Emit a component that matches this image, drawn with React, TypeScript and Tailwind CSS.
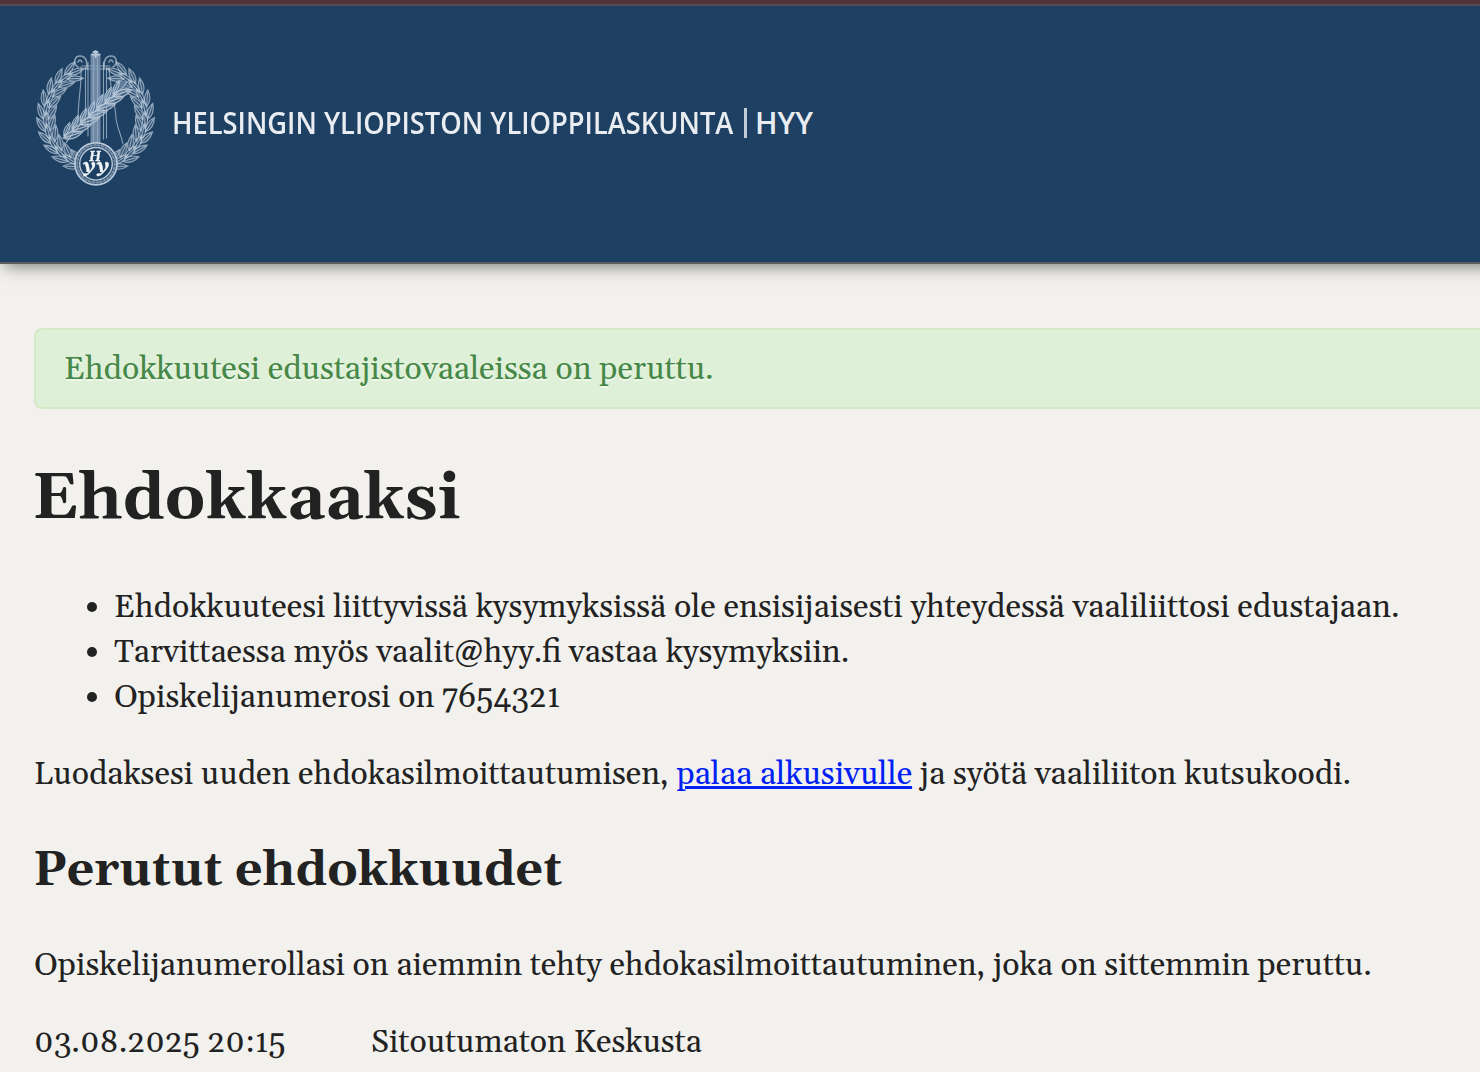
type Leaf = { x: number; y: number; a: number; s: number };

const round = (n: number) => Math.round(n * 10) / 10;

/* Leaves of one half of the wreath, growing from the medallion upwards. */
function wreathLeaves(side: 1 | -1): Leaf[] {
  const leaves: Leaf[] = [];
  for (let i = 0; i < 10; i++) {
    for (const [r, tilt, shift] of [[43.5, 26, 0], [49.5, 2, 5], [55, -24, 0]]) {
      const deg = 116 + i * 14 + shift;
      const t = (deg * Math.PI) / 180;
      leaves.push({
        x: round(95.5 + side * Math.cos(t) * r),
        y: round(117 + Math.sin(t) * r),
        a: side === 1 ? deg + 90 + tilt : 90 - deg - tilt,
        s: 1.2,
      });
    }
  }
  return leaves;
}

const branchLeaves: Leaf[] = Array.from({ length: 7 }).flatMap((_, i) => {
  const x = 68 + i * 8.2;
  const y = 132 - i * 7;
  return [
    { x: x - 1, y: y - 3, a: -66, s: 1.05 },
    { x: x + 5, y: y + 3, a: -18, s: 1.45 },
  ];
});

function Leaves({ items }: { items: Leaf[] }) {
  return (
    <>
      {items.map((l, i) => (
        <path
          key={i}
          d="M-7 0Q-1-4.6 7 0Q-1 4.6-7 0ZM-7 0H5"
          transform={`translate(${l.x} ${l.y}) rotate(${l.a}) scale(${l.s})`}
        />
      ))}
    </>
  );
}

function Emblem() {
  return (
    <svg
      viewBox="34 48 124 142"
      className="h-[142px] w-[124px] shrink-0 blur-[0.5px]"
      fill="none"
      stroke="#b9c9d9"
      strokeLinecap="round"
      aria-hidden="true"
    >
      <g strokeWidth="0.9" fill="#8fa6be" fillOpacity="0.2" strokeOpacity="0.75">
        <Leaves items={wreathLeaves(1)} />
        <Leaves items={wreathLeaves(-1)} />
      </g>
      <g strokeWidth="1.1" strokeOpacity="0.7">
        <path d="M85.5 67V123M88 62V136M103.5 62V139M106.5 67V138" />
        <path d="M81 67C82 86 78 98 78 120M109 68C110 88 115 102 116 118C117 128 121 134 123 144" />
        <path d="M82 66H110M83 69H108" />
        <path
          d="M78 67C73 64 74 56 80 56C87 56 87 63 87 69M78 62Q80 58 82 62M113 67C118 64 117 56 111 56C104 56 104 63 104 69M109 62Q111 58 113 62"
          strokeWidth="1.6"
        />
      </g>
      <rect x="90.5" y="54" width="10" height="90" fill="#7e97b2" fillOpacity="0.85" stroke="none" />
      <path d="M93.5 54V142M97.5 54V142" strokeOpacity="0.4" />
      <path d="M92 54.5H99.5M93.5 52H97.5M95.7 51V57" strokeWidth="2" />
      <path
        d="M66 142Q64 130 74 121Q84 113 94 103Q110 88 122 82Q130 83 125 91Q114 103 101 111Q86 118 76 126Z"
        fill="#5d7b9c"
        fillOpacity="0.85"
        stroke="none"
      />
      <g strokeWidth="0.85" fill="#8fa6be" fillOpacity="0.3" strokeOpacity="0.9">
        <Leaves items={branchLeaves} />
      </g>
      <path d="M66 143Q78 124 98 109T127 82" strokeWidth="1" />
      <circle cx="96" cy="163.8" r="21" fill="#1d4063" strokeWidth="1.8" />
      <circle cx="96" cy="163.8" r="18.7" strokeWidth="2.4" strokeOpacity="0.55" strokeDasharray="1.5 2.4" />
      <circle cx="96" cy="163.8" r="16.3" strokeWidth="1.4" />
      <g
        fill="#f2f5f8"
        stroke="#f2f5f8"
        strokeWidth="0.4"
        className="font-['Gelasio','Liberation_Serif',serif] font-bold italic"
        textAnchor="middle"
      >
        <text x="95" y="160.5" className="text-[13px]">H</text>
        <text x="96" y="171.5" className="text-[20px]">yy</text>
      </g>
    </svg>
  );
}

const items = [
  'Ehdokkuuteesi liittyvissä kysymyksissä ole ensisijaisesti yhteydessä vaaliliittosi edustajaan.',
  'Tarvittaessa myös vaalit@hyy.fi vastaa kysymyksiin.',
  'Opiskelijanumerosi on 7654321',
];

export default function App() {
  return (
    <div className="h-[1072px] w-full overflow-hidden bg-[#f2f1ed] font-['Gelasio','Georgia','Liberation_Serif',serif] text-[32px] leading-[45px] whitespace-nowrap text-[#222]">
      <div className="relative z-10 h-1 bg-[#533239]" />
      <header className="flex h-[260px] w-[1520px] items-start border-t-2 border-b-2 border-t-[#554b50] border-b-[#5c5c5c] bg-[#1d4063] pt-[42px] pl-[34px] shadow-[4px_2px_16px_#777]">
        <Emblem />
        <div className="mt-[54px] ml-[14px] flex items-center font-['Open_Sans','Noto_Sans',sans-serif] text-[30px] leading-[42px] font-semibold text-[#e9edf1]">
          <span className="w-[563px] origin-left scale-x-[0.91]">HELSINGIN YLIOPISTON YLIOPPILASKUNTA</span>
          <span className="mr-2 ml-[9px] h-[30px] w-[3px] bg-[#c3cdd8]" />
          <span>HYY</span>
        </div>
      </header>

      <main className="w-[1600px] pt-16 pl-[34px]">
        <div className="h-[81px] rounded-lg border-2 border-[#d6e9c6] bg-[#dff0d8] pt-[17px] pl-[28px] text-[#468847] [text-shadow:0_2px_0_rgba(255,255,255,0.5)]">
          Ehdokkuutesi edustajistovaaleissa on peruttu.
        </div>
        <h1 className="mt-[46px] -ml-0.5 text-[64px] leading-[90px] font-bold tracking-[0.25px]">Ehdokkaaksi</h1>
        <ul className="mt-10 list-disc pl-20">
          {items.map((t) => (
            <li key={t}>{t}</li>
          ))}
        </ul>
        <p className="mt-8">
          Luodaksesi uuden ehdokasilmoittautumisen,{' '}
          <a href="#" className="text-[#0021f5] underline decoration-[3px]">palaa alkusivulle</a> ja syötä vaaliliiton kutsukoodi.
        </p>
        <h2 className="mt-[40px] -ml-px text-[48px] leading-[67px] font-bold tracking-[0.08px]">Perutut ehdokkuudet</h2>
        <p className="mt-[39px]">
          Opiskelijanumerollasi on aiemmin tehty ehdokasilmoittautuminen, joka on sittemmin peruttu.
        </p>
        <div className="mt-8 flex">
          <span className="w-[337px]">03.08.2025 20:15</span>
          <span>Sitoutumaton Keskusta</span>
        </div>
      </main>
    </div>
  );
}
